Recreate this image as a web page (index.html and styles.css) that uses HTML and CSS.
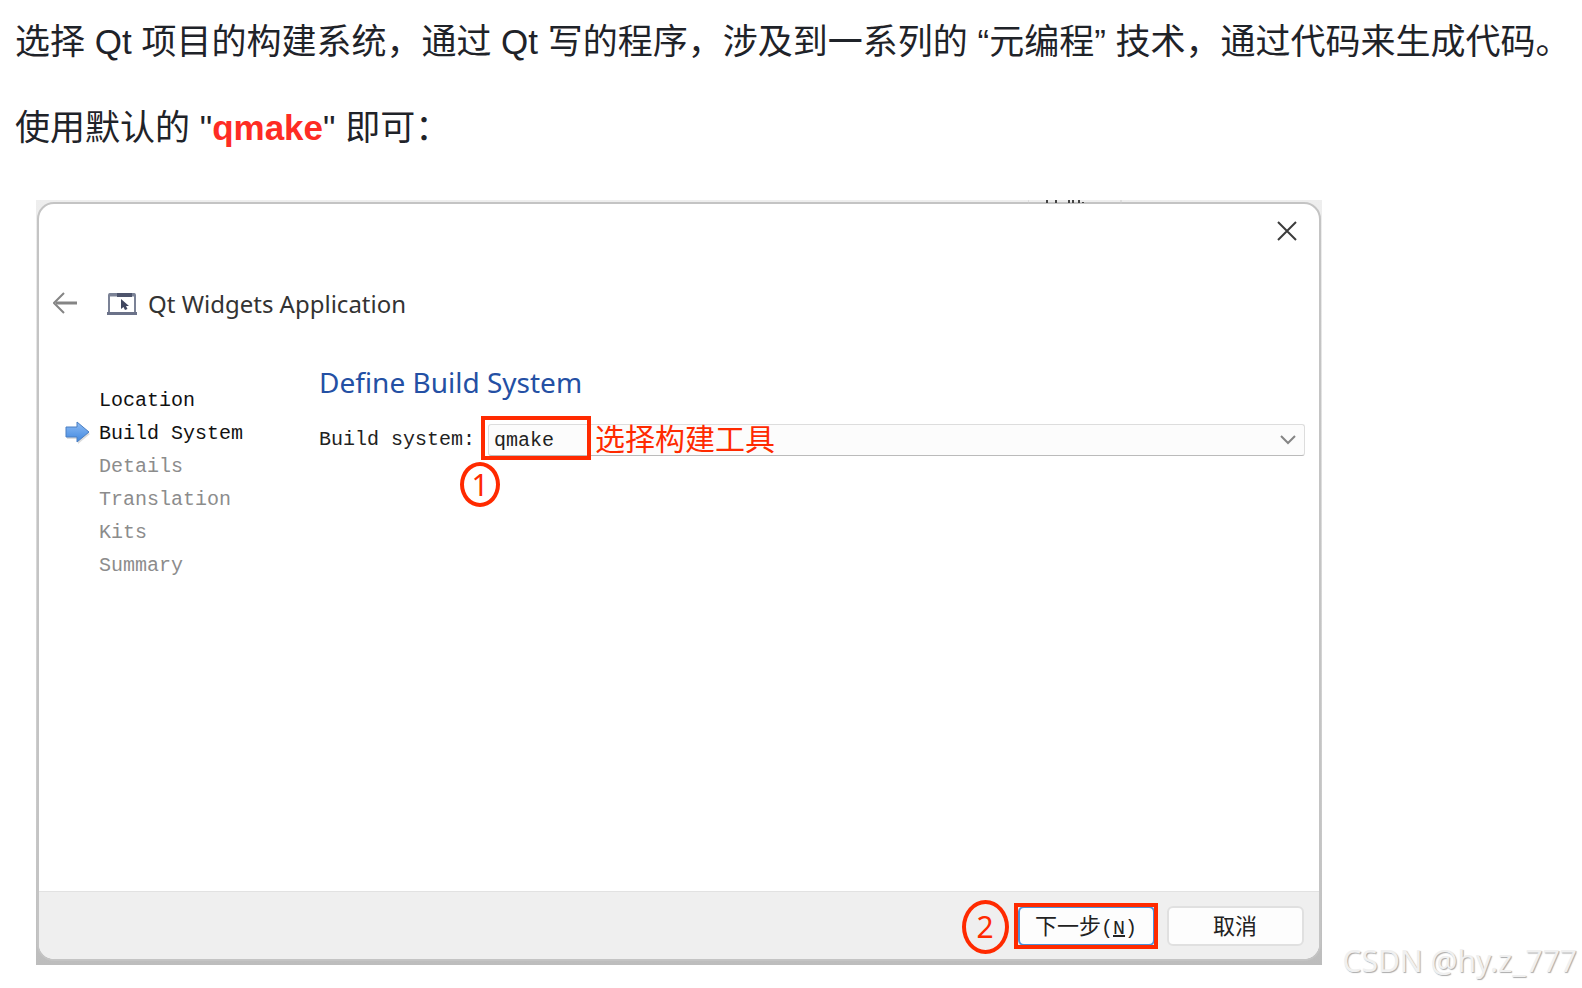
FILE: index.html
```html
<!DOCTYPE html>
<html lang="zh-CN">
<head>
<meta charset="utf-8">
<title>Qt Widgets Application</title>
<link rel="stylesheet" href="styles.css">
</head>
<body>
<main class="article">
  <p class="text">选择 Qt 项目的构建系统，通过 Qt 写的程序，涉及到一系列的 “元编程” 技术，通过代码来生成代码。</p>
  <p class="text">使用默认的 "<strong class="keyword">qmake</strong>" 即可：</p>
  <div class="media">
    <div class="backdrop">
      <svg class="behind" viewBox="0 0 94 4" aria-hidden="true"><path d="M0 0V4M93 0V4" stroke="#ccc"/><path d="M19 0V3M28 0V3M41 0V3M45 0V3M51 0V3M55 2V3" stroke="#444" stroke-width="2"/></svg>
      <section class="dialog">
        <div class="titlebar">
          <button class="icon-button" type="button" aria-label="Close"><svg width="20" height="20" viewBox="0 0 20 20"><path d="M1 1L19 19M19 1L1 19" stroke="#3c3c3c" stroke-width="2" fill="none"/></svg></button>
        </div>
        <header class="header">
          <button class="icon-button" type="button" aria-label="Back"><svg width="26" height="24" viewBox="0 0 26 24"><path d="M24 11H3" stroke="#858585" stroke-width="3"/><path d="M11 1L1 11L11 21" fill="none" stroke="#858585" stroke-width="2"/></svg></button>
          <svg class="app-icon" width="30" height="24" viewBox="0 0 30 24" aria-hidden="true"><rect x="2" y="2" width="26" height="19" rx="1" fill="#fff" stroke="#7b8296" stroke-width="2"/><path d="M2 3H28" stroke="#7b8296" stroke-width="3"/><path d="M10 3H25" stroke="#4d546c" stroke-width="4"/><path d="M0 21.500H30" stroke="#6b7289" stroke-width="3"/><path d="M14 7V17L16.500 15L18 18L20.500 17L19 14H22Z" fill="#3f465f"/></svg>
          <h1 class="title">Qt Widgets Application</h1>
        </header>
        <div class="content">
          <ol class="steps">
            <li class="step done">Location</li>
            <li class="step done current"><svg class="marker" width="26" height="24" viewBox="0 0 26 24" aria-hidden="true"><defs><linearGradient id="arrow" x2="0" y2="1"><stop stop-color="#8ebcf5"/><stop offset="1" stop-color="#3f87df"/></linearGradient></defs><path d="M2 8H13V3L25 13L13 23V18H2Z" fill="#ddd"/><path d="M1 6H12V1L24 11L12 21V16H1Z" fill="url(#arrow)" stroke="#4a7fc2"/></svg>Build System</li>
            <li class="step">Details</li>
            <li class="step">Translation</li>
            <li class="step">Kits</li>
            <li class="step">Summary</li>
          </ol>
          <form class="form">
            <h2 class="heading">Define Build System</h2>
            <div class="field">
              <label class="label" for="build">Build system:</label>
              <div class="control">
                <select class="select" id="build"><option>qmake</option></select>
                <svg class="chevron" width="16" height="10" viewBox="0 0 16 10" aria-hidden="true"><path d="M1 1L8 8L15 1" stroke="#858585" stroke-width="2" fill="none"/></svg>
                <span class="frame frame-select"></span>
                <span class="note">选择构建工具</span>
                <span class="badge badge-one">1</span>
              </div>
            </div>
          </form>
        </div>
        <footer class="footer">
          <div class="next">
            <span class="badge badge-two">2</span>
            <button class="button primary" type="button">下一步<span class="hint">(<u>N</u>)</span></button>
            <span class="frame frame-next"></span>
          </div>
          <button class="button" type="button">取消</button>
        </footer>
      </section>
    </div>
    <span class="watermark">CSDN @hy.z_777</span>
  </div>
</main>
</body>
</html>
```
FILE: styles.css
```css
* { box-sizing: border-box; }
body { margin: 0; background: #fff; color: #1f2329; font-family: "Liberation Sans", "Noto Sans CJK SC", sans-serif; }
.article { padding: 12px 0 9px 15px; }
.text { margin: 0 0 26px; font-size: 35px; line-height: 60px; }
.keyword { color: #fe2c24; }
.media { display: flex; align-items: flex-end; gap: 21px; margin: 42px 5px 0 21px; }
.backdrop { position: relative; flex: 1; margin-bottom: 14px; padding: 2px 1px 4px; background: linear-gradient(#eee, #c9c9c9 80%, #bdbdbd); }
.behind { position: absolute; top: 0; right: 200px; width: 94px; height: 4px; z-index: 1; }
.dialog { border: 2px solid #c4c4c4; border-radius: 17px; overflow: hidden; background: #fff; }
.titlebar { display: flex; justify-content: flex-end; align-items: center; height: 54px; padding-right: 22px; }
.icon-button { display: flex; padding: 0; border: 0; background: none; }
.header { display: flex; align-items: center; height: 40px; margin: 26px 14px 38px; }
.app-icon { margin: 0 11px 0 28px; }
.title { margin: 0; color: #333; font: 24px/40px "Noto Sans", sans-serif; }
.content { display: grid; grid-template-columns: 280px 1fr; min-height: 529px; padding-right: 14px; }
.steps { margin: 22px 0 0; padding: 0 0 0 60px; list-style: none; color: #8c8c8c; font: 20px/33px "Liberation Mono", monospace; }
.step { position: relative; }
.done { color: #111; }
.marker { position: absolute; left: -34px; top: 4px; }
.heading { margin: 0 0 22px; color: #2450a4; font: 28px/40px "Noto Sans", sans-serif; }
.field { display: flex; align-items: center; }
.label { width: 169px; color: #222; font: 20px/32px "Liberation Mono", monospace; }
.control { position: relative; flex: 1; }
.select { display: block; width: 100%; height: 32px; padding: 0 5px; border: 1px solid #ddd; border-bottom-color: #bbb; border-radius: 3px; appearance: none; background: #fcfcfc; color: #222; font: 20px "Liberation Mono", monospace; }
.chevron { position: absolute; top: 11px; right: 9px; }
.frame { position: absolute; border: 4px solid #ff2a00; pointer-events: none; }
.frame-select { left: -7px; top: -8px; width: 110px; height: 44px; }
.note { position: absolute; left: 107px; top: -7px; color: #ff2a00; font: 30px/40px "Noto Sans CJK SC", sans-serif; white-space: nowrap; }
.badge { position: absolute; display: grid; place-items: center; border: 4px solid #ff2a00; border-radius: 50%; color: #ff2a00; font-family: "Noto Sans", sans-serif; font-size: 30px; line-height: 36px; }
.badge-one { left: -28px; top: 38px; width: 40px; height: 45px; }
.badge-two { left: -56px; top: -6px; width: 47px; height: 54px; }
.footer { display: flex; justify-content: flex-end; gap: 12px; padding: 14px 15px 13px; border-top: 1px solid #e2e2e2; background: #efefef; }
.next { position: relative; }
.button { width: 137px; height: 40px; padding: 0 0 3px; border: 2px solid #e0e0e0; border-radius: 6px; background: #fdfdfd; color: #222; font: 22px "Liberation Mono", "Noto Sans CJK SC", monospace; }
.primary { border-color: #4a90d9; }
.hint { font-size: 20px; }
.frame-next { left: -4px; top: -3px; width: 144px; height: 46px; }
.watermark { color: #f0f0f0; text-shadow: 1px 1px 1px #aaa; font: 30px/36px "Noto Sans", sans-serif; white-space: nowrap; }
```
